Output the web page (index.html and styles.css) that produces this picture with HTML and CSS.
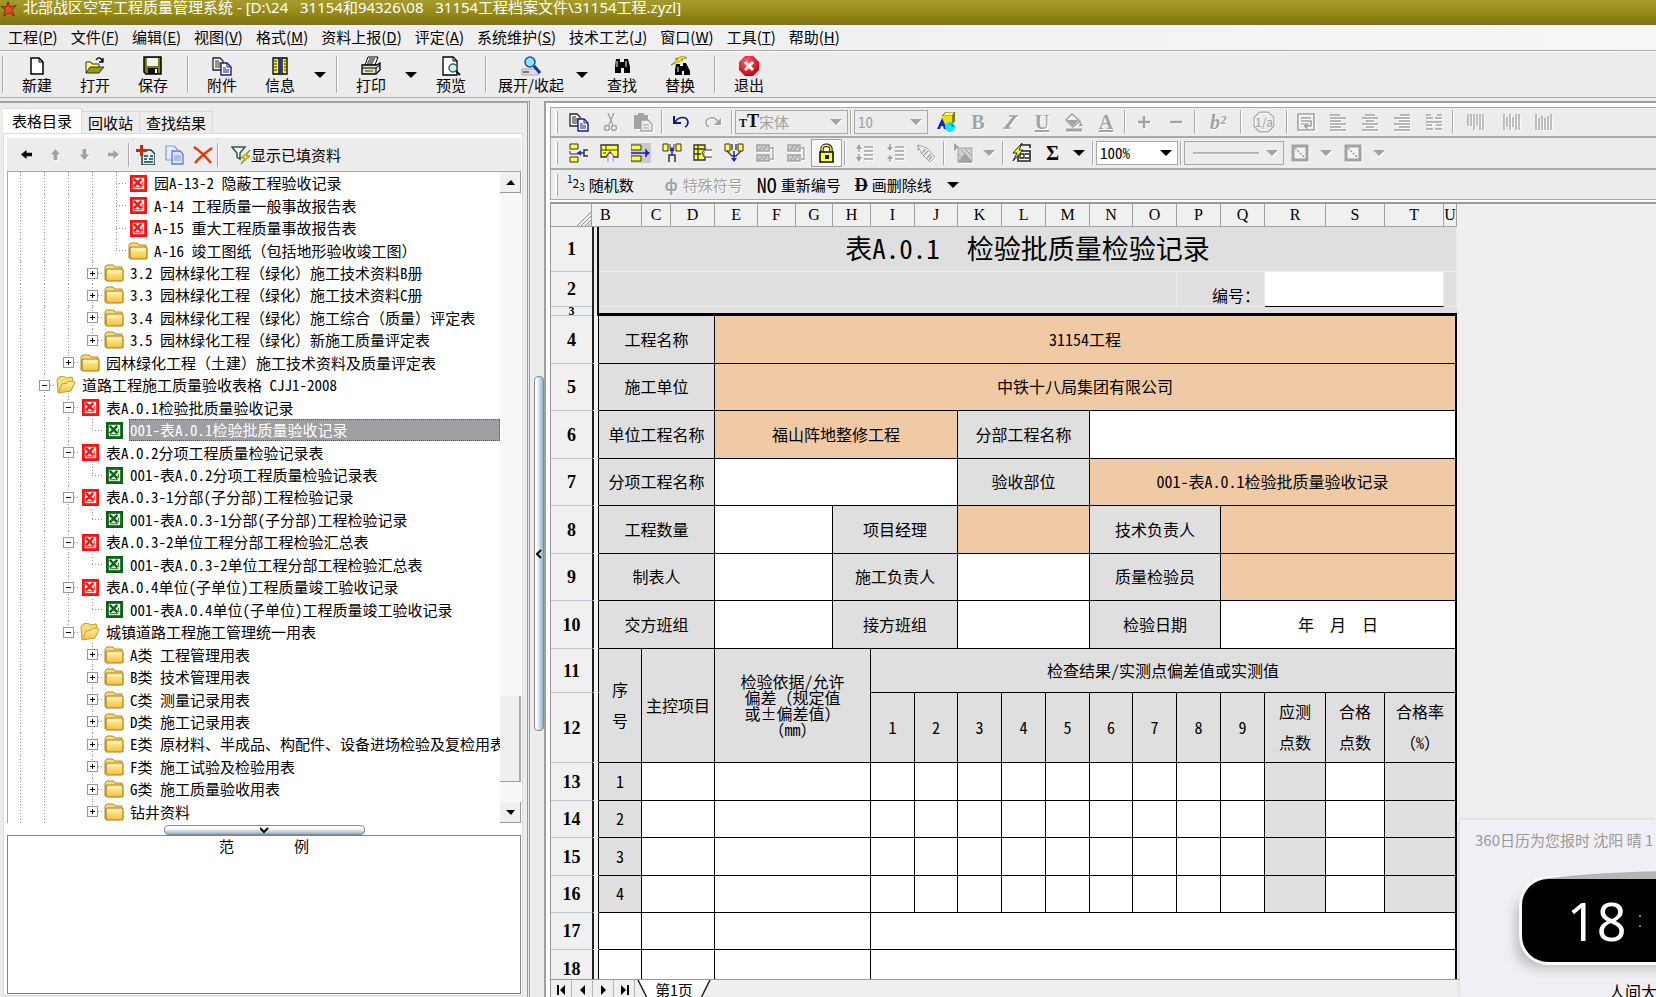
FILE: index.html
```html
<!DOCTYPE html>
<html lang="zh-CN">
<head>
  <meta charset="UTF-8" />
  <meta name="viewport" content="width=device-width, initial-scale=1.0" />
  <title>北部战区空军工程质量管理系统</title>
  <link rel="stylesheet" href="styles.css">
</head>
<body>
  <!-- iconos compartidos -->
  <svg class="defs" aria-hidden="true">
    <defs>
      <linearGradient id="gold" x1="0" y1="0" x2="0" y2="1"><stop offset="0" stop-color="#fff3b0"/><stop offset="1" stop-color="#f2c136"/></linearGradient>
      <radialGradient id="red" cx="0.4" cy="0.3" r="0.7"><stop offset="0" stop-color="#f66"/><stop offset="1" stop-color="#c4000e"/></radialGradient>
    </defs>
    <symbol id="i-star" viewBox="0 0 20 20"><path d="M9 2l2 6 7-2-5 5 3 7-6-4-6 4 2-7-5-4 6 1z" fill="#e8501a" stroke="#7a1c00"/></symbol>
    <symbol id="i-new" viewBox="0 0 20 20"><path d="M4 2h8l4 4v12H4z" fill="#fff" stroke="#000" stroke-width="1.5"/><path d="M12 2v4h4" fill="none" stroke="#000"/></symbol>
    <symbol id="i-open" viewBox="0 0 20 20"><path d="M1 17V6h5l1 2h7v3" fill="#ffff66" stroke="#333"/><path d="M1 17l4-6h14l-5 6z" fill="#99990a" stroke="#333"/><path d="M11 4c2-3 5-3 6 1M18 2v4h-4" fill="none" stroke="#000" stroke-width="1.3"/></symbol>
    <symbol id="i-save" viewBox="0 0 20 20"><path d="M1 1h17v17H3l-2-2z" fill="#7f7f0c" stroke="#000" stroke-width="1.5"/><path d="M4 2h11v8H4z" fill="#f4f4f4"/><path d="M5 12h10v6H5z" fill="#111"/><path d="M12 13h2v4h-2z" fill="#fff"/></symbol>
    <symbol id="i-pages" viewBox="0 0 20 20"><path d="M1 2h7l3 3v9H1z" fill="#fff" stroke="#222" stroke-width="1.3"/><path d="M3 5h4M3 7h6M3 9h6M3 11h6" stroke="#222"/><path d="M9 7h6l4 4v8H9z" fill="#fff" stroke="#1a1a8c" stroke-width="1.4"/><path d="M15 7v4h4M11 12h3M11 14h6M11 16h6" fill="none" stroke="#1a1a8c"/></symbol>
    <symbol id="i-info" viewBox="0 0 20 20"><path d="M3 2h6v16H3zM12 2h5v16h-5z" fill="#ffee33" stroke="#000" stroke-width="1.3"/><path d="M9 1h3v18H9z" fill="#1530e0"/><path d="M4 5h3M4 8h3M4 11h3M4 14h3M14 5h2M14 8h2M14 11h2M14 14h2" stroke="#222"/></symbol>
    <symbol id="i-print" viewBox="0 0 20 20"><path d="M7 1h10l-3 8H4z" fill="#fff" stroke="#000"/><path d="M8 3h6M7 5h6M6 7h6" stroke="#000"/><path d="M1 9h15l3-2v7l-4 4H1z" fill="#ddd" stroke="#000" stroke-width="1.3"/><path d="M1 12h14v6M15 12l4-3" fill="none" stroke="#000"/><path d="M4 15h8" stroke="#a90" stroke-width="2"/></symbol>
    <symbol id="i-preview" viewBox="0 0 20 20"><path d="M2 1h10l4 4v14H2z" fill="#fff" stroke="#000" stroke-width="1.3"/><path d="M12 1v4h4" fill="none" stroke="#000"/><circle cx="12" cy="12" r="4" fill="#bff6ff" stroke="#555" stroke-width="1.5"/><path d="M15 15l4 4" stroke="#111" stroke-width="2"/></symbol>
    <symbol id="i-expand" viewBox="0 0 20 20"><path d="M1 13h16v6H1z" fill="#ddd" stroke="#aaa"/><path d="M2 16h6" stroke="#555" stroke-width="1.5"/><path d="M13 10l6 7" stroke="#1436a0" stroke-width="3"/><circle cx="9" cy="6" r="5" fill="#8fe2ff" stroke="#1c4f9e" stroke-width="1.5"/></symbol>
    <symbol id="i-find" viewBox="0 0 20 20"><path d="M4 3h4v3h4V3h4l2 8v6h-6v-5H9v5H3v-6z" fill="#000"/><path d="M5 5v6M14 5v6" stroke="#fff"/></symbol>
    <symbol id="i-replace" viewBox="0 0 20 20"><path d="M6 8h4v2h3V7h3l4 8v4h-6v-4h-2v4H5v-5z" fill="#000"/><path d="M1 9l7-6-3 0 8-3 4 2-6 1 2 1z" fill="#ffee22" stroke="#665c00" stroke-width=".6"/><path d="M8 11v5" stroke="#fff"/></symbol>
    <symbol id="i-exit" viewBox="0 0 20 20"><path d="M6 0h8l6 6v8l-6 6H6l-6-6V6z" fill="url(#red)"/><path d="M6 6l8 8M14 6l-8 8" stroke="#fff" stroke-width="3"/></symbol>
    <symbol id="i-down" viewBox="0 0 12 8"><path d="M0 1h12L6 7z" fill="currentColor"/></symbol>
    <symbol id="i-left" viewBox="0 0 12 12"><path d="M0 6l6-5v3h6v4H6v3z" fill="currentColor"/></symbol>
    <symbol id="i-right" viewBox="0 0 12 12"><path d="M12 6L6 1v3H0v4h6v3z" fill="currentColor"/></symbol>
    <symbol id="i-up" viewBox="0 0 12 12"><path d="M6 0l5 6H8v6H4V6H1z" fill="currentColor"/></symbol>
    <symbol id="i-dn" viewBox="0 0 12 12"><path d="M6 12l5-6H8V0H4v6H1z" fill="currentColor"/></symbol>
    <symbol id="i-addform" viewBox="0 0 20 20"><path d="M7 5h9l4 4v11H7z" fill="#d9f4f4" stroke="#1c3c46" stroke-width="1.5"/><path d="M9 11h4M15 11h3M9 14h3M14 14h4M9 17h9" stroke="#1c3c46" stroke-width="1.5"/><path d="M5 0h3v4h4v3H8v4H5V7H1V4h4z" fill="#c22a14"/></symbol>
    <symbol id="i-copyblue" viewBox="0 0 20 20"><path d="M2 1h8l3 3v11H2z" fill="#e6edff" stroke="#7f95d8" stroke-width="1.2"/><path d="M8 6h8l3 3v10H8z" fill="#dce6ff" stroke="#5f7ad0" stroke-width="1.3"/><path d="M10 11h7M10 13h7M10 15h7" stroke="#7f95d8"/></symbol>
    <symbol id="i-delete" viewBox="0 0 20 20"><path d="M1 2c6 4 12 10 17 16M19 3C12 8 7 12 2 18" fill="none" stroke="#e8330c" stroke-width="2.4"/></symbol>
    <symbol id="i-filter" viewBox="0 0 20 20"><path d="M1 2h13L9 8v6l-3-2V8z" fill="#fff" stroke="#3b4f5a" stroke-width="1.5"/><path d="M19 5l-9 8h4l-4 6 9-8h-4z" fill="#ffe61c" stroke="#7a6c00" stroke-width=".8"/></symbol>
    <symbol id="i-folder" viewBox="0 0 20 18"><path d="M1 16V3l2-2h6l2 2h7v2" fill="#f8dc76" stroke="#b8861c"/><rect x="2" y="5" width="17" height="12" rx="1.5" fill="url(#gold)" stroke="#a87a18" stroke-width="1.2"/><path d="M4 8h12" stroke="#fff8d0"/></symbol>
    <symbol id="i-folderopen" viewBox="0 0 20 18"><path d="M2 16L1 4l2-3 5-1 2 2 6-1 1 4" fill="#f8dc76" stroke="#c79a2c"/><path d="M2 17l4-9 5-1 2-2 6 1-4 9z" fill="url(#gold)" stroke="#c79a2c"/></symbol>
    <symbol id="i-sheet" viewBox="0 0 18 18"><path d="M0 0h18v18H0z" fill="currentColor"/><path d="M3 3h12v12H3z" fill="#fff"/><path d="M4 4l8 8M12 4l-8 8" stroke="currentColor" stroke-width="2.6"/><path d="M13 7v5M4 13.5h9" stroke="currentColor" stroke-width="1"/></symbol>
    <!-- barra del editor -->
    <symbol id="e-cut" viewBox="0 0 20 20"><path d="M7 1l5 12M13 1L8 13" stroke="currentColor" stroke-width="1.5"/><circle cx="6" cy="16" r="2.5" fill="none" stroke="currentColor" stroke-width="1.5"/><circle cx="13" cy="16" r="2.5" fill="none" stroke="currentColor" stroke-width="1.5"/></symbol>
    <symbol id="e-paste" viewBox="0 0 20 20"><path d="M1 3h4V1h6v2h4v14H1z" fill="currentColor"/><path d="M8 8h7l4 4v7H8z" fill="#eee" stroke="currentColor" stroke-width="1.3"/><path d="M10 13h6M10 16h6" stroke="currentColor"/></symbol>
    <symbol id="e-undo" viewBox="0 0 20 20"><path d="M3 4v7h7" fill="none" stroke="currentColor" stroke-width="2"/><path d="M4 10c4-6 12-6 13 0 0 2-1 4-3 5" fill="none" stroke="currentColor" stroke-width="1.6"/></symbol>
    <symbol id="e-redo" viewBox="0 0 20 20"><path d="M18 6v7h-7z" fill="currentColor"/><path d="M15 10C12 4 4 5 3 10c0 2 1 4 3 5" fill="none" stroke="currentColor" stroke-width="1.5"/></symbol>
    <symbol id="e-paint" viewBox="0 0 20 20"><path d="M6 4l4-4h9l-3 4z" fill="#ff6" stroke="#665"/><path d="M6 4h10v9H6z" fill="#f6dc00"/><path d="M16 4l3-4v9l-3 4z" fill="#8a7a00"/><path d="M1 17l5-11 5 11H8l-1-3H5l-1 3z" fill="#1020d8"/><circle cx="14" cy="15" r="5" fill="#10e8f0"/><path d="M13 11l5 2-1 2z" fill="#0a8088"/></symbol>
    <symbol id="e-italic" viewBox="0 0 20 20"><path d="M9 4h9M3 16h8" stroke="currentColor" stroke-width="1.5"/><path d="M15 4L6 16" stroke="currentColor" stroke-width="3"/></symbol>
    <symbol id="e-fill" viewBox="0 0 20 20"><path d="M8 2l8 7-7 6-7-7z" fill="none" stroke="currentColor" stroke-width="1.6"/><path d="M3 8h12l-6 6zM16 9l3 5h-4z" fill="currentColor"/><path d="M2 18h16" stroke="currentColor" stroke-width="3"/></symbol>
    <symbol id="e-plus" viewBox="0 0 20 20"><path d="M10 4v12M4 10h12" stroke="currentColor" stroke-width="2.4"/></symbol>
    <symbol id="e-minus" viewBox="0 0 20 20"><path d="M4 10h12" stroke="currentColor" stroke-width="2.4"/></symbol>
    <symbol id="e-oct" viewBox="0 0 20 20"><path d="M6 1h8l5 5v8l-5 5H6l-5-5V6z" fill="none" stroke="currentColor"/></symbol>
    <symbol id="e-wrap" viewBox="0 0 20 20"><path d="M2 2h16v16H2zM5 6h10M5 9h10v5H9" fill="none" stroke="currentColor" stroke-width="1.6"/><path d="M5 12h8M11 12l-3 2 3 3z" stroke="currentColor" fill="currentColor"/></symbol>
    <symbol id="e-al" viewBox="0 0 20 20"><path d="M2 3h10M2 6h16M2 9h11M2 12h16M2 15h11M2 18h16" stroke="currentColor" stroke-width="1.3"/></symbol>
    <symbol id="e-ac" viewBox="0 0 20 20"><path d="M5 3h10M2 6h16M6 9h8M2 12h16M6 15h8M2 18h16" stroke="currentColor" stroke-width="1.3"/></symbol>
    <symbol id="e-ar" viewBox="0 0 20 20"><path d="M8 3h10M2 6h16M7 9h11M2 12h16M7 15h11M2 18h16" stroke="currentColor" stroke-width="1.3"/></symbol>
    <symbol id="e-ad" viewBox="0 0 20 20"><path d="M2 3h5M13 3h5M2 6h7M11 6h7M2 10h16M2 13h6M12 13h6M2 17h7M11 17h7" stroke="currentColor" stroke-width="1.5"/></symbol>
    <symbol id="e-v1" viewBox="0 0 20 20"><path d="M2 2v12M5 2v12M8 2v16M11 2v12M14 2v16M17 2v16" stroke="currentColor" stroke-width="1.3"/></symbol>
    <symbol id="e-v2" viewBox="0 0 20 20"><path d="M2 2v16M5 5v10M8 2v16M11 5v10M14 2v16M17 2v16" stroke="currentColor" stroke-width="1.3"/></symbol>
    <symbol id="e-v3" viewBox="0 0 20 20"><path d="M2 2v16M5 6v12M8 4v14M11 6v12M14 4v14M17 2v16" stroke="currentColor" stroke-width="1.3"/></symbol>
    <symbol id="e-rowins" viewBox="0 0 20 20"><path d="M1 1h8v5H1zM1 14h8v5H1z" fill="#ffff3c" stroke="#333"/><path d="M1 8v3h8" fill="none" stroke="#333"/><path d="M19 7h-4v6h4" fill="none" stroke="#333" stroke-width="1.5"/><path d="M15 10h-5M12 8l-3 2 3 2" fill="none" stroke="#22a" stroke-width="1.5"/></symbol>
    <symbol id="e-rowsel" viewBox="0 0 20 20"><path d="M1 2h17v12h-4l-4-5-4 5H1z" fill="#ffff3c" stroke="#333" stroke-width="1.3"/><path d="M1 7h17M6 2v6M3 10h3" stroke="#333"/><path d="M8 19v-7l2-2 3 2v7" fill="#fff" stroke="#a6f"/></symbol>
    <symbol id="e-rowadd" viewBox="0 0 20 20"><path d="M0 0h20v20H0z" fill="#c9c9c9"/><path d="M0 2h10v5H0zM0 13h10v5H0z" fill="#ffff3c" stroke="#333"/><path d="M0 10h18M15 6v8" fill="none" stroke="#22a" stroke-width="1.5"/><path d="M19 10l-4-3v6z" fill="#22a"/></symbol>
    <symbol id="e-colins" viewBox="0 0 20 20"><path d="M1 1h5v7H1zM14 1h5v7h-5z" fill="#ffff3c" stroke="#333"/><path d="M8 1v5M12 1v5" stroke="#333"/><path d="M7 19v-7h6v7" fill="none" stroke="#333" stroke-width="1.5"/><path d="M10 12V5M8 8l2-3 2 3" fill="none" stroke="#22a" stroke-width="1.5"/></symbol>
    <symbol id="e-colsel" viewBox="0 0 20 20"><path d="M1 2h11v15H1z" fill="#ffff3c" stroke="#333" stroke-width="1.3"/><path d="M5 2v15M1 6h11M1 11h7" stroke="#333" stroke-width="1.3"/><path d="M19 7h-8l-2 3 2 4h8" fill="#fff" stroke="#333"/><path d="M12 9c-2 0-2 3 0 4" stroke="#a3c" fill="none"/></symbol>
    <symbol id="e-coladd" viewBox="0 0 20 20"><path d="M1 1h5v7H1zM14 1h5v7h-5z" fill="#ffff3c" stroke="#333"/><path d="M3 8l5 5h4l5-5M8 1v6M12 1v6" fill="none" stroke="#333" stroke-width="1.3"/><path d="M10 8v9" stroke="#22a" stroke-width="1.5"/><path d="M10 19l-3-4h6z" fill="#22a"/></symbol>
    <symbol id="e-merge" viewBox="0 0 20 20"><path d="M2 2h12v6H2zM2 12h12v6H2z" fill="#d2d2d2" stroke="currentColor" stroke-width="1.5"/><path d="M4 7l4-4M8 7l4-4M4 17l4-4M8 17l4-4M15 5h3v11M15 16h4" fill="none" stroke="currentColor" stroke-width="1.3"/></symbol>
    <symbol id="e-lock" viewBox="0 0 20 20"><path d="M5 9V6c0-5 9-5 9 0v3" fill="none" stroke="#111" stroke-width="3.4"/><path d="M5 9V6c0-5 9-5 9 0v3" fill="none" stroke="#ff3" stroke-width="1.4"/><path d="M3 9h13v10H3z" fill="#ffff3c" stroke="#111" stroke-width="1.6"/><path d="M8 12h4v4H8z" fill="#117"/></symbol>
    <symbol id="e-lineup" viewBox="0 0 20 20"><path d="M5 3v14" stroke="currentColor" stroke-width="1.5" stroke-dasharray="6 2"/><path d="M5 1l3 5H2zM5 19l3-5H2z" fill="currentColor"/><path d="M10 4h9M10 8h9M10 12h9M10 16h9" stroke="currentColor" stroke-width="1.4"/></symbol>
    <symbol id="e-linedn" viewBox="0 0 20 20"><path d="M5 1v5M5 14v5" stroke="currentColor" stroke-width="1.5"/><path d="M5 8l3-4H2zM5 12l3 4H2z" fill="currentColor"/><path d="M10 4h9M10 8h9M10 12h9M10 16h9" stroke="currentColor" stroke-width="1.4"/></symbol>
    <symbol id="e-tag" viewBox="0 0 20 20"><path d="M2 2l3 8 9 9 5-5-8-9zM2 2v6" fill="none" stroke="currentColor"/><path d="M6 10l4-4M8 12l4-4M11 15l4-4M13 17l3-4" stroke="currentColor" stroke-width="1.6"/></symbol>
    <symbol id="e-pic" viewBox="0 0 20 20"><path d="M1 0l5 4-5 4z" fill="currentColor"/><path d="M5 5h14v14H5z" fill="#d0d0d0" stroke="currentColor"/><path d="M5 19l7-8 7 8zM8 7l9 9M5 11l8 8M12 6l7 7" fill="currentColor" stroke="currentColor"/></symbol>
    <symbol id="e-calc" viewBox="0 0 20 20"><path d="M8 2h10v3M6 8h12v10H6z" fill="#fff" stroke="#222" stroke-width="1.6"/><path d="M8 11h4v4H8zM13 11h4M13 15h4" fill="none" stroke="#222" stroke-width="1.3"/><path d="M10 0L1 10h4l-4 8 10-11H7z" fill="#ffff22" stroke="#222" stroke-width="1"/></symbol>
    <symbol id="e-box" viewBox="0 0 20 20"><path d="M3 3h14v14H3z" fill="#f4f4f4" stroke="currentColor" stroke-width="3"/><path d="M5 5l10 10" stroke="currentColor" stroke-width="1.6" stroke-dasharray="2 1.5"/></symbol>
    <symbol id="e-line" viewBox="0 0 66 4"><path d="M0 2h66" stroke="currentColor" stroke-width="1.5"/></symbol>
  </svg>

  <header class="titlebar">
    <svg class="icon"><use href="#i-star"/></svg>
    <h1>北部战区空军工程质量管理系统 - [D:\24   31154和94326\08   31154工程档案文件\31154工程.zyzl]</h1>
  </header>

  <nav class="menubar">
    <button>工程(<u>P</u>)</button>
    <button>文件(<u>F</u>)</button>
    <button>编辑(<u>E</u>)</button>
    <button>视图(<u>V</u>)</button>
    <button>格式(<u>M</u>)</button>
    <button>资料上报(<u>D</u>)</button>
    <button>评定(<u>A</u>)</button>
    <button>系统维护(<u>S</u>)</button>
    <button>技术工艺(<u>J</u>)</button>
    <button>窗口(<u>W</u>)</button>
    <button>工具(<u>T</u>)</button>
    <button>帮助(<u>H</u>)</button>
  </nav>

  <div class="toolbar">
    <div class="group">
      <button class="tool"><svg class="icon"><use href="#i-new"/></svg>新建</button>
      <button class="tool"><svg class="icon"><use href="#i-open"/></svg>打开</button>
      <button class="tool"><svg class="icon"><use href="#i-save"/></svg>保存</button>
    </div>
    <div class="group">
      <button class="tool"><svg class="icon"><use href="#i-pages"/></svg>附件</button>
      <button class="tool"><svg class="icon"><use href="#i-info"/></svg>信息</button>
      <button class="drop" aria-label="信息"><svg class="caret"><use href="#i-down"/></svg></button>
    </div>
    <div class="group">
      <button class="tool"><svg class="icon"><use href="#i-print"/></svg>打印</button>
      <button class="drop" aria-label="打印"><svg class="caret"><use href="#i-down"/></svg></button>
      <button class="tool"><svg class="icon"><use href="#i-preview"/></svg>预览</button>
    </div>
    <div class="group">
      <button class="tool wide"><svg class="icon"><use href="#i-expand"/></svg>展开/收起</button>
      <button class="drop" aria-label="展开/收起"><svg class="caret"><use href="#i-down"/></svg></button>
      <button class="tool"><svg class="icon"><use href="#i-find"/></svg>查找</button>
      <button class="tool"><svg class="icon"><use href="#i-replace"/></svg>替换</button>
    </div>
    <div class="group">
      <button class="tool"><svg class="icon"><use href="#i-exit"/></svg>退出</button>
    </div>
  </div>

  <main class="work">
    <aside class="side">
      <div class="tabs">
        <button class="tab active">表格目录</button>
        <button class="tab">回收站</button>
        <button class="tab">查找结果</button>
      </div>
      <div class="side-body">
        <div class="side-tools">
          <button aria-label="后退"><svg class="arrow"><use href="#i-left"/></svg></button>
          <button class="off" aria-label="上移"><svg class="arrow"><use href="#i-up"/></svg></button>
          <button class="off" aria-label="下移"><svg class="arrow"><use href="#i-dn"/></svg></button>
          <button class="off" aria-label="前进"><svg class="arrow"><use href="#i-right"/></svg></button>
          <span class="sep"></span>
          <button aria-label="新增"><svg class="icon"><use href="#i-addform"/></svg></button>
          <button aria-label="复制"><svg class="icon"><use href="#i-copyblue"/></svg></button>
          <button aria-label="删除"><svg class="icon"><use href="#i-delete"/></svg></button>
          <span class="sep"></span>
          <button class="filter"><svg class="icon"><use href="#i-filter"/></svg>显示已填资料</button>
        </div>
        <div class="tree-box">
          <ul class="tree" id="tree"></ul>
          <div class="scroll">
            <button aria-label="向上"><svg class="tri"><path d="M0 6h9L5 1z"/></svg></button>
            <span class="track"></span>
            <span class="thumb"></span>
            <span class="track end"></span>
            <button aria-label="向下"><svg class="tri"><path d="M0 1h9L5 6z"/></svg></button>
          </div>
        </div>
        <button class="hsplit" aria-label="折叠"><svg class="tri"><path d="M0 1l4 4 4-4" fill="none" stroke="#000" stroke-width="2"/></svg></button>
        <div class="sample"><span>范</span><span>例</span></div>
      </div>
    </aside>

    <button class="vsplit" aria-label="折叠"><svg viewBox="0 0 6 10"><path d="M5 1L1 5l4 4" fill="none" stroke="#000" stroke-width="2"/></svg></button>

    <section class="editor">
      <div class="bar">
        <span class="grip"></span>
        <button aria-label="复制"><svg class="icon"><use href="#i-pages"/></svg></button>
        <button class="off" aria-label="剪切"><svg class="icon"><use href="#e-cut"/></svg></button>
        <button class="off" aria-label="粘贴"><svg class="icon"><use href="#e-paste"/></svg></button>
        <span class="sep"></span>
        <button class="blue" aria-label="撤销"><svg class="icon"><use href="#e-undo"/></svg></button>
        <button class="off" aria-label="恢复"><svg class="icon"><use href="#e-redo"/></svg></button>
        <span class="sep"></span>
        <label class="combo font off"><b>T<b>T</b></b><select aria-label="字体" disabled><option>宋体</option></select><svg class="caret"><use href="#i-down"/></svg></label>
        <span class="sep"></span>
        <label class="combo size off"><select aria-label="字号" disabled><option>10</option></select><svg class="caret"><use href="#i-down"/></svg></label>
        <button aria-label="颜色"><svg class="icon"><use href="#e-paint"/></svg></button>
        <button class="off letter">B</button>
        <button class="off" aria-label="斜体"><svg class="icon"><use href="#e-italic"/></svg></button>
        <button class="off letter"><u>U</u></button>
        <button class="off" aria-label="填充"><svg class="icon"><use href="#e-fill"/></svg></button>
        <button class="off letter"><u>A</u></button>
        <span class="sep"></span>
        <button class="off" aria-label="增大"><svg class="icon"><use href="#e-plus"/></svg></button>
        <button class="off" aria-label="减小"><svg class="icon"><use href="#e-minus"/></svg></button>
        <span class="sep"></span>
        <button class="off letter roomy"><i>b²</i></button>
        <span class="sep"></span>
        <button class="off roomy oct"><svg class="icon"><use href="#e-oct"/></svg><span>1/a</span></button>
        <span class="sep"></span>
        <button class="off" aria-label="换行"><svg class="icon"><use href="#e-wrap"/></svg></button>
        <button class="off" aria-label="左对齐"><svg class="icon"><use href="#e-al"/></svg></button>
        <button class="off" aria-label="居中"><svg class="icon"><use href="#e-ac"/></svg></button>
        <button class="off" aria-label="右对齐"><svg class="icon"><use href="#e-ar"/></svg></button>
        <button class="off" aria-label="分散对齐"><svg class="icon"><use href="#e-ad"/></svg></button>
        <span class="sep"></span>
        <button class="off roomy" aria-label="顶端"><svg class="icon"><use href="#e-v1"/></svg></button>
        <button class="off" aria-label="中间"><svg class="icon"><use href="#e-v2"/></svg></button>
        <button class="off" aria-label="底端"><svg class="icon"><use href="#e-v3"/></svg></button>
      </div>

      <div class="bar second">
        <span class="grip"></span>
        <button aria-label="插入行"><svg class="icon"><use href="#e-rowins"/></svg></button>
        <button aria-label="删除行"><svg class="icon"><use href="#e-rowsel"/></svg></button>
        <button aria-label="追加行"><svg class="icon"><use href="#e-rowadd"/></svg></button>
        <button aria-label="插入列"><svg class="icon"><use href="#e-colins"/></svg></button>
        <button aria-label="删除列"><svg class="icon"><use href="#e-colsel"/></svg></button>
        <button aria-label="追加列"><svg class="icon"><use href="#e-coladd"/></svg></button>
        <button class="off" aria-label="合并"><svg class="icon"><use href="#e-merge"/></svg></button>
        <button class="off" aria-label="拆分"><svg class="icon"><use href="#e-merge"/></svg></button>
        <button class="pressed" aria-label="锁定"><svg class="icon"><use href="#e-lock"/></svg></button>
        <span class="sep"></span>
        <button class="off" aria-label="行距加"><svg class="icon"><use href="#e-lineup"/></svg></button>
        <button class="off" aria-label="行距减"><svg class="icon"><use href="#e-linedn"/></svg></button>
        <button class="off" aria-label="标签"><svg class="icon"><use href="#e-tag"/></svg></button>
        <span class="sep"></span>
        <button class="off" aria-label="图片"><svg class="icon"><use href="#e-pic"/></svg></button>
        <button class="off narrow" aria-label="图片"><svg class="caret"><use href="#i-down"/></svg></button>
        <span class="sep"></span>
        <button aria-label="计算"><svg class="icon"><use href="#e-calc"/></svg></button>
        <button class="letter">Σ</button>
        <button class="narrow" aria-label="求和"><svg class="caret"><use href="#i-down"/></svg></button>
        <span class="sep"></span>
        <label class="combo zoom"><select aria-label="缩放"><option>100%</option></select><svg class="caret"><use href="#i-down"/></svg></label>
        <span class="sep"></span>
        <label class="combo line off"><svg class="stroke"><use href="#e-line"/></svg><select aria-label="线型" disabled><option></option></select><svg class="caret"><use href="#i-down"/></svg></label>
        <button class="off" aria-label="边框"><svg class="icon"><use href="#e-box"/></svg></button>
        <button class="off narrow" aria-label="边框"><svg class="caret"><use href="#i-down"/></svg></button>
        <button class="off" aria-label="斜线"><svg class="icon"><use href="#e-box"/></svg></button>
        <button class="off narrow" aria-label="斜线"><svg class="caret"><use href="#i-down"/></svg></button>
      </div>

      <div class="bar third">
        <span class="grip"></span>
        <button class="text"><span class="num"><sup>1</sup>2<sub>3</sub></span>随机数</button>
        <button class="text off"><b>ф</b>特殊符号</button>
        <button class="text"><span class="no">NO</span>重新编号</button>
        <button class="text"><s><b>D</b></s>画删除线</button>
        <button class="narrow" aria-label="画删除线"><svg class="caret"><use href="#i-down"/></svg></button>
      </div>

      <div class="sheet">
        <table class="grid">
          <colgroup>
            <col class="c41"><col class="c7"><col class="c43"><col class="c29"><col class="c44"><col class="c43"><col class="c38"><col class="c37"><col class="c38">
            <col class="c44"><col class="c43"><col class="c44"><col class="c44"><col class="c44"><col class="c43"><col class="c44"><col class="c44"><col class="c44">
            <col class="c61"><col class="c59"><col class="c59"><col class="c13">
          </colgroup>
          <thead>
            <tr>
              <th class="corner"><svg viewBox="0 0 14 14"><path d="M0 14L14 0M4 14L14 4M8 14l6-6M11 14l3-3" stroke="#888"/></svg></th>
              <th colspan="2" class="first">B</th><th>C</th><th>D</th><th>E</th><th>F</th><th>G</th><th>H</th><th>I</th><th>J</th><th>K</th><th>L</th><th>M</th><th>N</th><th>O</th><th>P</th><th>Q</th><th>R</th><th>S</th><th>T</th><th>U</th>
            </tr>
          </thead>
          <tbody>
            <tr class="r45 soft"><th>1</th><td class="edge"></td><td colspan="20" class="g title">表A.0.1  检验批质量检验记录</td></tr>
            <tr class="r35 soft"><th>2</th><td class="edge"></td><td colspan="14" class="g"></td><td colspan="2" class="g code"><label for="code">编号<span class="fw">：</span></label></td><td colspan="3" class="write"><input id="code" type="text"></td><td class="g"></td></tr>
            <tr class="r9 soft"><th><span>3</span></th><td class="edge"></td><td colspan="20" class="g"></td></tr>
            <tr class="r48"><th>4</th><td class="gap"></td><td colspan="3" class="g">工程名称</td><td colspan="17" class="p">31154工程</td></tr>
            <tr class="r47"><th>5</th><td class="gap"></td><td colspan="3" class="g">施工单位</td><td colspan="17" class="p">中铁十八局集团有限公司</td></tr>
            <tr class="r48"><th>6</th><td class="gap"></td><td colspan="3" class="g">单位工程名称</td><td colspan="6" class="p">福山阵地整修工程</td><td colspan="3" class="g">分部工程名称</td><td colspan="8"></td></tr>
            <tr class="r47"><th>7</th><td class="gap"></td><td colspan="3" class="g">分项工程名称</td><td colspan="6"></td><td colspan="3" class="g">验收部位</td><td colspan="8" class="p">001-表A.0.1检验批质量验收记录</td></tr>
            <tr class="r48"><th>8</th><td class="gap"></td><td colspan="3" class="g">工程数量</td><td colspan="3"></td><td colspan="3" class="g">项目经理</td><td colspan="3" class="p"></td><td colspan="3" class="g">技术负责人</td><td colspan="5" class="p"></td></tr>
            <tr class="r47"><th>9</th><td class="gap"></td><td colspan="3" class="g">制表人</td><td colspan="3"></td><td colspan="3" class="g">施工负责人</td><td colspan="3"></td><td colspan="3" class="g">质量检验员</td><td colspan="5" class="p"></td></tr>
            <tr class="r48"><th>10</th><td class="gap"></td><td colspan="3" class="g">交方班组</td><td colspan="3"></td><td colspan="3" class="g">接方班组</td><td colspan="3"></td><td colspan="3" class="g">检验日期</td><td colspan="5">年  月  日</td></tr>
            <tr class="r44"><th>11</th><td class="gap"></td><td rowspan="2" class="g tall">序<br>号</td><td rowspan="2" colspan="2" class="g">主控项目</td><td rowspan="2" colspan="4" class="g">检验依据/允许<br>偏差<span class="fw">（</span>规定值<br>或±偏差值<span class="fw">）</span><br><span class="fw">（</span>mm<span class="fw">）</span></td><td colspan="13" class="g">检查结果/实测点偏差值或实测值</td></tr>
            <tr class="r70"><th>12</th><td class="gap"></td><td class="g">1</td><td class="g">2</td><td class="g">3</td><td class="g">4</td><td class="g">5</td><td class="g">6</td><td class="g">7</td><td class="g">8</td><td class="g">9</td><td class="g tall">应测<br>点数</td><td class="g tall">合格<br>点数</td><td colspan="2" class="g tall">合格率<br><span class="fw">（</span>%<span class="fw">）</span></td></tr>
            <tr class="r38"><th>13</th><td class="gap"></td><td class="g">1</td><td colspan="2"></td><td colspan="4"></td><td></td><td></td><td></td><td></td><td></td><td></td><td></td><td></td><td></td><td class="g"></td><td></td><td colspan="2" class="g"></td></tr>
            <tr class="r37"><th>14</th><td class="gap"></td><td class="g">2</td><td colspan="2"></td><td colspan="4"></td><td></td><td></td><td></td><td></td><td></td><td></td><td></td><td></td><td></td><td class="g"></td><td></td><td colspan="2" class="g"></td></tr>
            <tr class="r38"><th>15</th><td class="gap"></td><td class="g">3</td><td colspan="2"></td><td colspan="4"></td><td></td><td></td><td></td><td></td><td></td><td></td><td></td><td></td><td></td><td class="g"></td><td></td><td colspan="2" class="g"></td></tr>
            <tr class="r37"><th>16</th><td class="gap"></td><td class="g">4</td><td colspan="2"></td><td colspan="4"></td><td></td><td></td><td></td><td></td><td></td><td></td><td></td><td></td><td></td><td class="g"></td><td></td><td colspan="2" class="g"></td></tr>
            <tr class="r37"><th>17</th><td class="gap"></td><td></td><td colspan="2"></td><td colspan="4"></td><td colspan="13"></td></tr>
            <tr class="r38"><th>18</th><td class="gap"></td><td></td><td colspan="2"></td><td colspan="4"></td><td colspan="13"></td></tr>
          </tbody>
        </table>
      </div>

      <div class="pages">
        <button aria-label="首页"><svg viewBox="0 0 9 10"><path d="M0 0h2v10H0zM8 0v10L3 5z"/></svg></button>
        <button aria-label="上一页"><svg viewBox="0 0 9 10"><path d="M7 0v10L2 5z"/></svg></button>
        <button aria-label="下一页"><svg viewBox="0 0 9 10"><path d="M2 0v10l5-5z"/></svg></button>
        <button aria-label="末页"><svg viewBox="0 0 9 10"><path d="M7 0h2v10H7zM1 0v10l5-5z"/></svg></button>
        <a class="page" href="#"><svg viewBox="0 0 74 20"><path d="M0 0l10 20h53L73 0z" fill="#fff"/><path d="M1 0l10 20M63 20L73 0" fill="none" stroke="#222" stroke-width="1.5"/></svg><span>第1页</span></a>
      </div>
    </section>
  </main>

  <!-- aviso del calendario -->
  <div class="clock">
    <p class="weather">360日历为您报时 沈阳 晴 1</p>
    <svg class="fin" viewBox="0 0 120 8"><path d="M0 8Q40 2 120 0v8z" fill="#b5b5b5"/></svg>
    <div class="face"><span>18</span><i></i></div>
    <p class="quote">人间大</p>
  </div>

  <script src="script.js"></script>
</body>
</html>
```

FILE: styles.css
```css
* {
  box-sizing: border-box;
}
body {
  margin: 0;
  height: 100vh;
  display: flex;
  flex-direction: column;
  overflow: hidden;
  background: #ececec;
  color: #000;
  font-family: "Noto Sans CJK SC", sans-serif;
  font-size: 15px;
  line-height: 20px;
}
button {
  display: flex;
  align-items: center;
  justify-content: center;
  padding: 0;
  border: none;
  background: none;
  color: inherit;
  font: inherit;
  white-space: nowrap;
}
.defs {
  position: absolute;
  width: 0;
  height: 0;
}
.icon {
  width: 20px;
  height: 20px;
  flex: none;
}
.caret {
  width: 12px;
  height: 8px;
  flex: none;
}
.off {
  color: #a2a2a2;
}
.off svg {
  filter: drop-shadow(1px 1px 0 #fff);
}

/* barra de título y menú */
.titlebar {
  flex: none;
  height: 25px;
  display: flex;
  align-items: flex-start;
  gap: 5px;
  background: linear-gradient(#a59a2e, #9a8f1c 40%, #85790f 88%, #77703c);
}
.titlebar .icon {
  width: 18px;
  height: 18px;
}
.titlebar h1 {
  margin: 0;
  color: #fff;
  font-family: "Noto Sans", "Noto Sans CJK SC", sans-serif;
  font-size: 15px;
  font-weight: 400;
  line-height: 14px;
  white-space: pre;
}
.menubar {
  flex: none;
  height: 26px;
  padding: 0 8px 2px;
  display: flex;
  gap: 13px;
  background: linear-gradient(90deg, #ececec, #f6f6f6);
  border-bottom: 1px solid #a9a9a9;
}
.toolbar {
  flex: none;
  height: 47px;
  padding: 4px 0 4px 2px;
  display: flex;
  border-top: 1px solid #fff;
  border-bottom: 1px solid #a9a9a9;
}
.group {
  display: flex;
  padding: 0 5px;
  border-left: 1px solid #a9a9a9;
  box-shadow: inset 1px 0 0 #fff;
}
.tool {
  width: 58px;
  flex-direction: column;
  line-height: 18px;
}
.tool.wide {
  width: 80px;
}
.drop {
  width: 22px;
}

/* panel izquierdo */
.work {
  flex: 1;
  min-height: 0;
  display: flex;
  padding-top: 3px;
}
.side {
  width: 530px;
  flex: none;
  display: flex;
  flex-direction: column;
  padding: 5px 4px 1px 3px;
  border-top: 2px solid #a0a0a0;
  border-right: 3px double #999;
}
.tabs {
  height: 25px;
  flex: none;
  display: flex;
  align-items: flex-end;
}
.tab {
  height: 22px;
  padding: 0 6px;
  border: 1px solid #dadada;
  border-left: none;
  border-bottom: none;
}
.tab.active {
  height: 25px;
  padding: 0 9px;
  background: #fff;
}
.side-body {
  flex: 1;
  min-height: 0;
  display: flex;
  flex-direction: column;
  padding: 4px 1px 1px 3px;
  border: 1px solid #dcdcdc;
  background: #fff;
}
.side-tools {
  height: 33px;
  flex: none;
  display: flex;
  align-items: center;
  padding-left: 5px;
  background: #ececec;
}
.side-tools button {
  width: 29px;
  height: 24px;
}
.side-tools .sep {
  margin: 0;
}
.side-tools .filter {
  width: auto;
  padding-left: 12px;
}
.arrow {
  width: 11px;
  height: 11px;
}
.sep {
  width: 2px;
  height: 24px;
  margin: 0 2px;
  flex: none;
  border-left: 1px solid #a9a9a9;
  background: #fff;
}
.tree-box {
  flex: 1;
  min-height: 0;
  display: flex;
  border-top: 1px solid #a9a9a9;
  border-left: 1px solid #a9a9a9;
}
.tree {
  flex: 1;
  min-width: 0;
  margin: 0;
  padding: 0;
  display: grid;
  grid-auto-rows: 1fr;
  overflow: hidden;
  list-style: none;
  font-feature-settings: "hwid";
}
.fw {
  font-feature-settings: normal;
}
.tree li {
  display: flex;
  align-items: center;
  min-height: 0;
  overflow: hidden;
  white-space: pre;
}
.tree .icon {
  height: 18px;
  margin-right: 5px;
}
.tree .red,
.tree .green {
  width: 17px;
  height: 17px;
  margin: 0 6px 0 2px;
}
.red {
  color: #f51414;
}
.green {
  color: #0a6414;
}
.tree .label {
  flex: 1;
  align-self: stretch;
  display: flex;
  align-items: center;
  padding-left: 1px;
  overflow: hidden;
}
.tree .selected .label {
  background: #9f9ea3;
  color: #fff;
  outline: 1px dotted #555;
  outline-offset: -1px;
}
.rail {
  width: 24px;
  flex: none;
  align-self: stretch;
  display: flex;
  align-items: center;
  justify-content: center;
  background-repeat: no-repeat;
}
.v,
.t {
  background-image: repeating-linear-gradient(#999 0 1px, transparent 1px 3px);
  background-size: 1px 100%;
  background-position: 12px 0;
}
.t {
  background-image: repeating-linear-gradient(#999 0 1px, transparent 1px 3px), repeating-linear-gradient(90deg, #999 0 1px, transparent 1px 3px);
  background-size: 1px 100%, 12px 1px;
  background-position: 12px 0, 12px 50%;
}
.l {
  background-image: repeating-linear-gradient(#999 0 1px, transparent 1px 3px), repeating-linear-gradient(90deg, #999 0 1px, transparent 1px 3px);
  background-size: 1px 50%, 12px 1px;
  background-position: 12px 0, 12px 50%;
}
.toggle {
  width: 11px;
  height: 11px;
  border: 1px solid #999;
  background: linear-gradient(#000, #000) center / 5px 1px no-repeat #fff;
}
.toggle.plus {
  background: linear-gradient(#000, #000) center / 5px 1px no-repeat, linear-gradient(#000, #000) center / 1px 5px no-repeat #fff;
}
.scroll {
  width: 21px;
  flex: none;
  display: flex;
  flex-direction: column;
  background: #f8f8f8;
}
.scroll button {
  height: 21px;
  background: #f0f0f0;
  border-right: 1px solid #999;
  border-bottom: 1px solid #999;
}
.tri {
  width: 9px;
  height: 7px;
}
.track {
  flex: 505;
}
.track.end {
  flex: 20;
}
.thumb {
  flex: 85;
  background: #efefef;
  border-right: 2px solid #aaa;
  border-bottom: 1px solid #999;
}
.hsplit {
  width: 201px;
  height: 10px;
  flex: none;
  margin-top: 2px;
  align-self: center;
  border: 1px solid #8a8a8a;
  border-radius: 4px;
  background: linear-gradient(#fff 30%, #8fb3c9);
}
.sample {
  height: 159px;
  flex: none;
  display: flex;
  justify-content: center;
  gap: 60px;
  border: 1px solid #7f858e;
}
.vsplit {
  width: 10px;
  height: 355px;
  flex: none;
  align-self: flex-start;
  margin: 275px 0 0 4px;
  border: 1px solid #8a8a8a;
  border-radius: 4px;
  background: linear-gradient(90deg, #fff 20%, #8fb3c9);
}
.vsplit svg {
  width: 6px;
  height: 10px;
}

/* editor */
.editor {
  flex: 1;
  min-width: 0;
  display: flex;
  flex-direction: column;
  padding: 4px 0 0 4px;
  border-top: 2px solid #a0a0a0;
  border-left: 2px solid #a0a0a0;
  background: #fff;
}
.bar {
  height: 30px;
  flex: none;
  display: flex;
  align-items: center;
  border: 1px solid #a9a9a9;
  border-right: none;
  background: #ececec;
}
.bar button {
  width: 32px;
  height: 28px;
  flex: none;
}
.bar.second {
  height: 32px;
}
.bar.second button {
  width: 31px;
}
.bar.third {
  height: 31px;
}
.grip {
  width: 3px;
  height: 22px;
  margin: 0 5px 0 4px;
  flex: none;
  border-right: 1px solid #a9a9a9;
  background: #fff;
}
.bar button.roomy {
  width: 40px;
}
.bar button.narrow {
  width: 22px;
}
.bar button.pressed {
  background: #f8f8f8;
  border: 1px solid #a0a0a0;
}
.blue {
  color: #16168c;
}
.letter {
  font-family: "Liberation Serif", serif;
  font-size: 20px;
  font-weight: 700;
}
.off.letter,
.third .off {
  text-shadow: 1px 1px 0 #fff;
}
.oct {
  position: relative;
  font-size: 12px;
}
.bar .oct .icon {
  width: 22px;
  height: 22px;
}
.oct span {
  position: absolute;
}
.combo {
  height: 24px;
  flex: none;
  display: flex;
  align-items: center;
  padding: 0 5px 0 3px;
  border: 1px solid #a9a9a9;
}
.combo select {
  flex: 1;
  min-width: 0;
  padding: 0;
  border: none;
  appearance: none;
  background: none;
  color: inherit;
  font: inherit;
  font-feature-settings: "hwid";
  opacity: 1;
}
.combo.font {
  width: 113px;
}
.combo b {
  width: 20px;
  color: #111;
  font-family: "Liberation Serif", serif;
  font-size: 12px;
}
.combo b b {
  font-size: 18px;
}
.combo.size {
  width: 74px;
  margin-right: 2px;
}
.combo.zoom {
  width: 82px;
  background: #fff;
}
.combo.line {
  width: 100px;
}
.stroke {
  width: 66px;
  height: 4px;
  flex: none;
  margin: 0 5px;
}
.bar.third .text {
  width: auto;
  margin-left: 4px;
  margin-right: 10px;
  gap: 4px;
}
.bar.third .text:first-of-type {
  margin-right: 26px;
}
.num {
  display: flex;
  font-size: 12px;
  line-height: 14px;
}
.num sup,
.num sub {
  font-size: 10px;
}
.num sup {
  vertical-align: top;
  margin-top: -4px;
}
.num sub {
  margin-top: 4px;
}
.third b {
  width: 15px;
}
.no {
  font-size: 20px;
  font-feature-settings: "hwid";
}
.third s {
  font-family: "Liberation Serif", serif;
  font-size: 18px;
}

/* hoja */
.sheet {
  flex: 1;
  min-height: 0;
  margin-top: 2px;
  overflow: hidden;
  border-top: 2px solid #999;
  border-left: 1px solid #999;
  background: #efefef;
}
.grid {
  width: 906px;
  table-layout: fixed;
  border-collapse: separate;
  border-spacing: 0;
  font-size: 16px;
  line-height: 16px;
  font-feature-settings: "hwid";
}
.c7 { width: 7px; }
.c13 { width: 13px; }
.c29 { width: 29px; }
.c37 { width: 37px; }
.c38 { width: 38px; }
.c41 { width: 41px; }
.c43 { width: 43px; }
.c44 { width: 44px; }
.c59 { width: 59px; }
.c61 { width: 61px; }
.r9 { height: 9px; }
.r35 { height: 35px; }
.r37 { height: 37px; }
.r38 { height: 38px; }
.r44 { height: 44px; }
.r45 { height: 45px; }
.r47 { height: 47px; }
.r48 { height: 48px; }
.r70 { height: 70px; }
.grid th {
  padding: 0;
  background: #f0f0f0;
  border-bottom: 1px solid #bfc7cf;
  font-family: "Liberation Serif", serif;
  font-size: 18px;
}
.grid thead th {
  height: 23px;
  border-right: 1px solid #a0a0a0;
  border-bottom: 1px solid #a0a0a0;
  font-size: 16px;
  font-weight: 400;
}
.grid thead .first {
  padding-left: 8px;
  text-align: left;
}
.grid thead .corner {
  text-align: right;
  vertical-align: bottom;
}
.corner svg {
  display: block;
  width: 14px;
  height: 14px;
  margin-left: auto;
}
.grid td {
  padding: 0 0 2px;
  text-align: center;
  white-space: pre;
  background: #fff;
  border-right: 1px solid #000;
  border-bottom: 1px solid #000;
}
.grid td.g {
  background: #dfdfdf;
}
.grid td.p {
  background: #f0c9a5;
}
.grid td:last-child {
  border-right: 2px solid #000;
}
.grid .soft td {
  border-right: 1px solid #ececec;
  border-bottom: 1px solid #ececec;
}
.grid .soft td.edge {
  background: #eee;
  border-left: 2px solid #222;
  border-right: 2px solid #111;
  border-bottom: none;
}
.grid .gap {
  background: #f4f4f4;
  border-left: 2px solid #222;
  border-bottom-color: #f4f4f4;
}
.grid .title {
  font-size: 27px;
  line-height: 30px;
}
.grid .soft .code {
  padding: 0 4px 3px 0;
  text-align: right;
  vertical-align: bottom;
}
.grid .soft .write {
  padding: 0;
  border-bottom: 1px solid #000;
}
.write input {
  width: 100%;
  height: 32px;
  display: block;
  border: none;
  font: inherit;
}
.grid .r9 td {
  padding: 0;
}
.grid .r9 th {
  font-size: 12px;
  line-height: 8px;
}
.r9 span {
  display: block;
  height: 8px;
  overflow: hidden;
}
.grid .r9 td:last-child {
  border-right: none;
  border-bottom: 3px solid #000;
}
.grid .tall {
  line-height: 31px;
}
.pages {
  height: 18px;
  flex: none;
  display: flex;
  overflow: hidden;
  border-top: 1px solid #999;
  border-left: 1px solid #999;
  background: #efefef;
}
.pages button {
  width: 21px;
  height: 20px;
  border-right: 1px solid #b5b5b5;
}
.pages button svg {
  width: 9px;
  height: 10px;
}
.page {
  position: relative;
  width: 74px;
  height: 20px;
  margin-left: 2px;
  color: #000;
  text-align: center;
  text-decoration: none;
  font-feature-settings: "hwid";
}
.page svg {
  position: absolute;
  left: 0;
  top: 0;
  width: 74px;
  height: 20px;
}
.page span {
  position: relative;
  line-height: 18px;
}

/* reloj */
.clock {
  position: absolute;
  right: 0;
  bottom: 0;
  width: 196px;
  height: 177px;
  padding: 10px 0 0 15px;
  overflow: hidden;
  background: #f0eff5;
  box-shadow: 0 0 4px #ccc;
}
.clock p {
  margin: 0;
  white-space: nowrap;
}
.weather {
  color: #999;
}
.fin {
  display: block;
  width: 120px;
  height: 8px;
  margin: 21px 0 0 68px;
}
.face {
  width: 180px;
  height: 83px;
  margin-left: 47px;
  display: flex;
  align-items: center;
  gap: 12px;
  padding-left: 45px;
  border-radius: 26px;
  background: #000;
  color: #fff;
  font-family: "Noto Sans", sans-serif;
  font-size: 52px;
  box-shadow: 0 0 0 3px #fafafa, -10px 10px 12px -4px #bbb;
}
.face i {
  width: 2px;
  height: 12px;
  border-top: 2px solid #777;
  border-bottom: 2px solid #777;
}
.clock .quote {
  margin: 19px 0 0 134px;
  font-size: 16px;
}
```

FILE: script.js
```javascript
// v = línea, t = rama, l = última rama, + / - = nodo, p / m = último nodo, espacio = vacío
const filas = [
  ["vvvvt", "red", "园A-13-2 隐蔽工程验收记录"],
  ["vvvvt", "red", "A-14 工程质量一般事故报告表"],
  ["vvvvt", "red", "A-15 重大工程质量事故报告表"],
  ["vvvvl", "folder", "A-16 竣工图纸（包括地形验收竣工图）"],
  ["vvv+", "folder", "3.2 园林绿化工程（绿化）施工技术资料B册"],
  ["vvv+", "folder", "3.3 园林绿化工程（绿化）施工技术资料C册"],
  ["vvv+", "folder", "3.4 园林绿化工程（绿化）施工综合（质量）评定表"],
  ["vvvp", "folder", "3.5 园林绿化工程（绿化）新施工质量评定表"],
  ["vvp", "folder", "园林绿化工程（土建）施工技术资料及质量评定表"],
  ["v-", "open", "道路工程施工质量验收表格 CJJ1-2008"],
  ["vv-", "red", "表A.0.1检验批质量验收记录"],
  ["vvvl", "green", "001-表A.0.1检验批质量验收记录", true],
  ["vv-", "red", "表A.0.2分项工程质量检验记录表"],
  ["vvvl", "green", "001-表A.0.2分项工程质量检验记录表"],
  ["vv-", "red", "表A.0.3-1分部(子分部)工程检验记录"],
  ["vvvl", "green", "001-表A.0.3-1分部(子分部)工程检验记录"],
  ["vv-", "red", "表A.0.3-2单位工程分部工程检验汇总表"],
  ["vvvl", "green", "001-表A.0.3-2单位工程分部工程检验汇总表"],
  ["vv-", "red", "表A.0.4单位(子单位)工程质量竣工验收记录"],
  ["vvvl", "green", "001-表A.0.4单位(子单位)工程质量竣工验收记录"],
  ["vvm", "open", "城镇道路工程施工管理统一用表"],
  ["vv +", "folder", "A类 工程管理用表"],
  ["vv +", "folder", "B类 技术管理用表"],
  ["vv +", "folder", "C类 测量记录用表"],
  ["vv +", "folder", "D类 施工记录用表"],
  ["vv +", "folder", "E类 原材料、半成品、构配件、设备进场检验及复检用表"],
  ["vv +", "folder", "F类 施工试验及检验用表"],
  ["vv +", "folder", "G类 施工质量验收用表"],
  ["vv p", "folder", "钻井资料"]
];

const iconos = { red: "i-sheet", green: "i-sheet", folder: "i-folder", open: "i-folderopen" };

function rail(c) {
  if (c === "+" || c === "p") {
    return `<span class="rail ${c === "+" ? "t" : "l"}"><button class="toggle plus" aria-label="展开"></button></span>`;
  }
  if (c === "-" || c === "m") {
    return `<span class="rail ${c === "-" ? "t" : "l"}"><button class="toggle" aria-label="折叠"></button></span>`;
  }
  return `<span class="rail ${c.trim()}"></span>`;
}

// los paréntesis anchos conservan su ancho completo
function ancho(texto) {
  return texto.replace(/[（）、]/g, '<span class="fw">$&</span>');
}

document.getElementById("tree").innerHTML = filas.map(([rails, tipo, texto, activo]) => `
  <li class="${activo ? "selected" : ""}">${[...rails].map(rail).join("")}<svg class="icon ${tipo}"><use href="#${iconos[tipo]}"/></svg><span class="label">${ancho(texto)}</span></li>
`).join("");
```
